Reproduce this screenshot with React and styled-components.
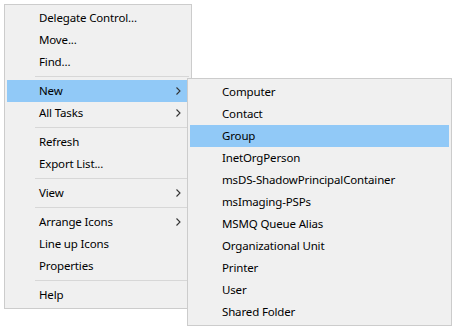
import styled, { createGlobalStyle } from 'styled-components';

const GlobalStyle = createGlobalStyle`
	html, body {
		margin: 0;
		padding: 0;
		background: #fff;
	}
	body {
		font-family: "Noto Sans", "Open Sans", sans-serif;
		font-size: 11.5px;
		letter-spacing: -0.15px;
		color: #000;
	}
`;

const Page = styled.div`
	padding: 4px;
	width: 454px;
	height: 326px;
	box-sizing: border-box;
`;

const Menu = styled.div`
	position: ${props => props.sub ? 'absolute' : 'relative'};
	top: ${props => props.sub ? '73px' : 'auto'};
	left: ${props => props.sub ? '182px' : 'auto'};
	width: ${props => props.width}px;
	box-sizing: border-box;
	background-color: #f0f0f0;
	border: 1px solid #cccccc;
	padding: 2px;
	display: flex;
	flex-direction: column;
	z-index: ${props => props.sub ? 2 : 1};
`;

const Item = styled.div`
	height: 22px;
	display: flex;
	align-items: center;
	padding-left: 32px;
	padding-right: 8px;
	background-color: ${props => props.active ? '#91c9f7' : 'transparent'};
	white-space: nowrap;
`;

const Label = styled.span`
	flex: 1;
	line-height: 22px;
`;

const Separator = styled.div`
	height: 7px;
	display: flex;
	align-items: center;
	padding-left: 28px;

	&::after {
		content: '';
		flex: 1;
		height: 1px;
		background-color: #d7d7d7;
	}
`;

const Arrow = () => (
	<svg width="5" height="8" viewBox="0 0 5 8">
		<path d="M0.5 0.5 L4 4 L0.5 7.5" fill="none" stroke="#333" strokeWidth="1.1" />
	</svg>
);

const mainItems = [
	{ label: 'Delegate Control...' },
	{ label: 'Move...' },
	{ label: 'Find...' },
	{ sep: true },
	{ label: 'New', sub: true, active: true },
	{ label: 'All Tasks', sub: true },
	{ sep: true },
	{ label: 'Refresh' },
	{ label: 'Export List...' },
	{ sep: true },
	{ label: 'View', sub: true },
	{ sep: true },
	{ label: 'Arrange Icons', sub: true },
	{ label: 'Line up Icons' },
	{ label: 'Properties' },
	{ sep: true },
	{ label: 'Help' },
];

const newItems = [
	'Computer',
	'Contact',
	'Group',
	'InetOrgPerson',
	'msDS-ShadowPrincipalContainer',
	'msImaging-PSPs',
	'MSMQ Queue Alias',
	'Organizational Unit',
	'Printer',
	'User',
	'Shared Folder',
];

function App() {
	return (
		<>
			<GlobalStyle />
			<Page>
				<Menu width={188}>
					{mainItems.map((item, i) =>
						item.sep ? (
							<Separator key={i} />
						) : (
							<Item key={i} active={item.active}>
								<Label>{item.label}</Label>
								{item.sub && <Arrow />}
							</Item>
						)
					)}
					<Menu sub width={265}>
						{newItems.map((label) => (
							<Item key={label} active={label === 'Group'}>
								<Label>{label}</Label>
							</Item>
						))}
					</Menu>
				</Menu>
			</Page>
		</>
	);
}

export default App;
